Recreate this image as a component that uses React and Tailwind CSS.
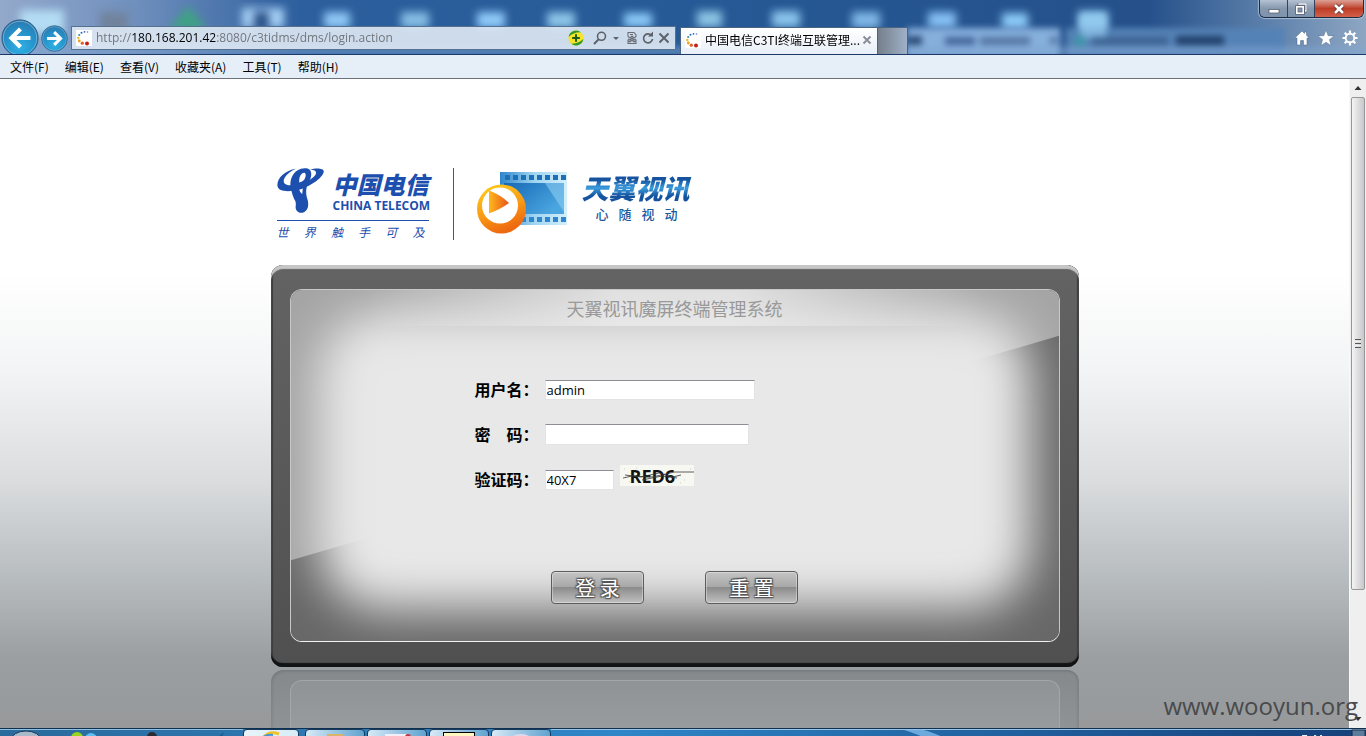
import React from "react";

const blobs = [
  [20, 10, 44, 24, "#b4dcf4"],
  [100, 12, 28, 22, "#71839c"],
  [242, 8, 42, 20, "#a4cef4"],
  [324, 12, 26, 16, "#8fc8f6"],
  [401, 12, 28, 16, "#86bde4"],
  [477, 12, 28, 16, "#8fcafa"],
  [547, 12, 28, 16, "#8cc4e8"],
  [624, 13, 28, 14, "#8ccaf8"],
  [697, 11, 25, 16, "#8cc4e4"],
  [772, 11, 28, 16, "#8ac4ec"],
  [852, 12, 28, 16, "#80b8e8"],
  [928, 12, 28, 16, "#86c0f4"],
  [1002, 13, 26, 16, "#8ccaf8"],
  [1078, 11, 30, 34, "#8cc8ee"],
];

const menus = ["文件(F)", "编辑(E)", "查看(V)", "收藏夹(A)", "工具(T)", "帮助(H)"];

function Glass() {
  return (
    <svg className="absolute inset-0 h-full w-full" viewBox="0 0 1366 54" preserveAspectRatio="none" aria-hidden="true">
      <defs>
        <filter id="soft" colorInterpolationFilters="sRGB"><feGaussianBlur stdDeviation="4" /></filter>
        <filter id="soft2" colorInterpolationFilters="sRGB"><feGaussianBlur stdDeviation="3" /></filter>
        <linearGradient id="sky" x1="0" x2="1" y1="0" y2="0">
          <stop offset="0" stopColor="#93a9cb" />
          <stop offset="0.1" stopColor="#6f8fbd" />
          <stop offset="0.22" stopColor="#2d5f9e" />
          <stop offset="0.5" stopColor="#265a96" />
          <stop offset="0.84" stopColor="#25508a" />
          <stop offset="0.93" stopColor="#5f82ac" />
          <stop offset="1" stopColor="#8ea6c2" />
        </linearGradient>
      </defs>
      <rect width="1366" height="54" fill="url(#sky)" />
      <g filter="url(#soft)">
        {blobs.map(([x, y, w, h, c]) => (
          <rect key={x} x={x} y={y} width={w} height={h} fill={c} />
        ))}
        <path d="M168 30 L188 6 L208 30Z" fill="#3fa184" />
        <rect x="254" y="12" width="15" height="16" fill="#2c5186" />
      </g>
      <g filter="url(#soft2)">
        <rect x="907" y="28" width="153" height="30" fill="#86afdc" />
        <rect x="1066" y="28" width="218" height="30" fill="#5582b6" />
        <rect x="0" y="47" width="1366" height="8" fill="#7ea5d2" opacity="0.6" />
        <rect x="1080" y="14" width="26" height="24" fill="#93c9ee" opacity="0.700" />
        <rect x="908" y="36" width="14" height="9" fill="#2c4c76" />
        <rect x="945" y="37" width="30" height="8" fill="#45669a" />
        <rect x="980" y="37" width="50" height="8" fill="#5576a3" />
        <rect x="1092" y="37" width="76" height="8" fill="#3c6291" />
        <rect x="1176" y="36" width="48" height="9" fill="#203f6a" />
        <rect x="1050" y="37" width="7" height="7" fill="#5576a3" />
        <circle cx="1080" cy="41" r="6" fill="#3f94a8" />
      </g>
    </svg>
  );
}

function Favicon() {
  return (
    <svg className="h-4 w-4 shrink-0 bg-white" viewBox="0 0 16 16" aria-hidden="true">
      <circle cx="11.5" cy="2" r="0.8" fill="#5b7fd0" />
      <circle cx="8.5" cy="1.8" r="0.9" fill="#2f5fc0" />
      <circle cx="5.5" cy="2.8" r="1" fill="#2a6ab8" />
      <circle cx="3.2" cy="5" r="1.1" fill="#3f8fa0" />
      <circle cx="2.3" cy="8" r="1.2" fill="#e8b92c" />
      <circle cx="3.3" cy="11" r="1.4" fill="#efa020" />
      <circle cx="6.3" cy="13.2" r="1.6" fill="#e0602a" />
      <circle cx="11" cy="13.4" r="2" fill="#c4201c" />
    </svg>
  );
}

function NavArrow({ left, className }) {
  return (
    <svg className={className} viewBox="0 0 40 40" aria-hidden="true">
      <defs>
        <radialGradient id="orb" cx="0.5" cy="0.75" r="0.75">
          <stop offset="0" stopColor="#2fb0e4" />
          <stop offset="0.6" stopColor="#2590c8" />
          <stop offset="1" stopColor="#2d79ad" />
        </radialGradient>
      </defs>
      <circle cx="20" cy="20" r="19" fill="url(#orb)" stroke="#2b5578" strokeWidth="1" />
      <circle cx="20" cy="20" r="17.6" fill="none" stroke="#a9dcf4" strokeWidth="1" opacity="0.5" />
      <path
        d={left ? "M31 20H12M20.5 10.5L11 20l9.5 9.5" : "M9 20h19M19.5 10.5L29 20l-9.5 9.5"}
        fill="none" stroke="#fff" strokeWidth="4.4"
      />
    </svg>
  );
}

function AddressTools() {
  return (
    <div className="flex items-center">
      <button type="button" aria-label="加速" className="mr-2">
        <svg className="h-4 w-4" viewBox="0 0 16 16">
          <circle cx="8" cy="8" r="7.6" fill="#f5e526" />
          <path d="M0.6 7A7.6 7.6 0 0 1 13 2.4Q6 2 0.6 7Z M15.4 9A7.6 7.6 0 0 1 3 13.6Q10 14 15.4 9Z" fill="#2f9a2c" />
          <path d="M8 4.2v7.6M4.2 8h7.6" stroke="#1c5c1c" strokeWidth="2" />
        </svg>
      </button>
      <button type="button" aria-label="搜索" className="mr-1">
        <svg className="h-4 w-4" viewBox="0 0 16 16" fill="none" stroke="#5c6068">
          <circle cx="9.5" cy="6.3" r="4" strokeWidth="1.6" />
          <path d="M6.6 9.4L2 14" strokeWidth="2" />
        </svg>
      </button>
      <button type="button" aria-label="更多" className="mr-1">
        <svg className="h-4 w-2" viewBox="0 0 8 16"><path d="M1 7h6L4 10Z" fill="#5c6068" /></svg>
      </button>
      <button type="button" aria-label="兼容性视图">
        <svg className="h-4 w-4" viewBox="0 0 16 16" fill="none" stroke="#6a6e76" strokeWidth="1.1">
          <path d="M4 6.500V2.500h6l2 2.500v2M4 6.500l2 1.500 2-2 2 2 2-1.500M4 13.500v-3l2 1.500 2-2 2 2 2-1.500v3ZM6 4.500h3M4 9l2 1 2-2 2 2 2-1" />
        </svg>
      </button>
      <button type="button" aria-label="刷新">
        <svg className="h-4 w-4" viewBox="0 0 16 16" fill="none" stroke="#5c6068">
          <path d="M11.500 5.500A4.500 4.500 0 1 0 12.500 9" strokeWidth="1.7" />
          <path d="M8 6.500h5V1.500Z" fill="#5c6068" stroke="none" />
        </svg>
      </button>
      <button type="button" aria-label="停止">
        <svg className="h-4 w-4" viewBox="0 0 16 16" stroke="#5c6068" strokeWidth="1.900">
          <path d="M3.500 3.500l9 9M12.500 3.500l-9 9" />
        </svg>
      </button>
    </div>
  );
}

function WindowControls() {
  return (
    <div className="absolute right-0.5 top-0 flex h-[18px] overflow-hidden rounded-b-md border border-t-0 border-[#1e2c40] shadow-[0_0_1px_1px_rgba(220,235,250,0.5)]">
      <button type="button" aria-label="最小化" className="flex w-7 items-center justify-center border-r border-[#33435c] bg-linear-to-b from-[#b4c2d2] via-[#8698ae] via-50% to-[#7d93ad]">
        <svg className="h-3 w-3" viewBox="0 0 12 12"><rect x="1" y="6.500" width="10" height="3.500" fill="#fff" stroke="#4a5568" strokeWidth="0.700" /></svg>
      </button>
      <button type="button" aria-label="还原" className="flex w-[27px] items-center justify-center border-r border-[#33435c] bg-linear-to-b from-[#b4c2d2] via-[#8698ae] via-50% to-[#7d93ad]">
        <svg className="h-3 w-3" viewBox="0 0 12 12" fill="none">
          <path d="M4 3V1h7v7H9" stroke="#4a5568" strokeWidth="2.600" />
          <rect x="1.800" y="3.800" width="6.400" height="6.400" stroke="#4a5568" strokeWidth="3" />
          <path d="M4 2V1h7v7h-1" stroke="#fff" strokeWidth="1.300" />
          <rect x="1.800" y="3.800" width="6.400" height="6.400" stroke="#fff" strokeWidth="1.700" />
        </svg>
      </button>
      <button type="button" aria-label="关闭" className="flex w-12 items-center justify-center bg-linear-to-b from-[#dba094] via-[#bd3c26] via-50% to-[#d2604a]">
        <svg className="h-3 w-3" viewBox="0 0 12 12">
          <path d="M2 2l8 8M10 2l-8 8" stroke="#5a2a28" strokeWidth="4" />
          <path d="M2 2l8 8M10 2l-8 8" stroke="#fff" strokeWidth="2.600" />
        </svg>
      </button>
    </div>
  );
}

function BrowserBar() {
  return (
    <header className="relative h-[54px] shrink-0 overflow-hidden">
      <Glass />
      <div className="relative flex h-full items-start pr-2 pt-[26px]">
        <nav className="-mt-[7px] flex items-center gap-0.5 pl-px">
          <button type="button" aria-label="后退"><NavArrow left className="block h-[38px] w-[38px]" /></button>
          <button type="button" aria-label="前进"><NavArrow className="block h-[27px] w-[27px]" /></button>
        </nav>
        <div className="ml-[3px] flex h-6 w-[605px] items-center border border-[#56708f] bg-[#dfe9f4]/90 pl-1 pr-[3px]">
          <Favicon />
          <div className="ml-1 flex-1 whitespace-nowrap font-['Open_Sans','Noto_Sans_CJK_SC',sans-serif] text-xs leading-4 text-[#73787f]">
            http://<span className="text-black">180.168.201.42</span>:8080/c3tidms/dms/login.action
          </div>
          <AddressTools />
        </div>
        <div className="ml-1 mt-px flex h-7 w-[198px] items-center border border-b-0 border-[#4a6486] bg-linear-to-b from-white to-[#e7eef8] px-1 pb-[3px] text-xs text-black">
          <Favicon />
          <span className="ml-1 flex-1 whitespace-nowrap">中国电信C3TI终端互联管理...</span>
          <button type="button" aria-label="关闭标签页">
            <svg className="h-3 w-3" viewBox="0 0 12 12" stroke="#8a8e96" strokeWidth="2"><path d="M2.500 2.500l7 7M9.500 2.500l-7 7" /></svg>
          </button>
        </div>
        <button type="button" aria-label="新建标签页" className="mt-px h-7 w-[30px] border border-b-0 border-l-0 border-[#4a6486] bg-linear-to-r from-[#76808c] to-[#9fb0c8]" />
        <div className="ml-auto mt-1 flex gap-2">
          <button type="button" aria-label="主页">
            <svg className="h-4 w-4" viewBox="0 0 16 16"><path d="M8 1L0.800 8H3v7h3.500v-4.500h3V15H13V8h2.200L12.500 5.300V2h-2v1.400Z" fill="#fff" stroke="#4c6585" strokeWidth="0.500" /></svg>
          </button>
          <button type="button" aria-label="收藏夹">
            <svg className="h-4 w-4" viewBox="0 0 16 16"><path d="M8 0l2.100 5.700 5.900.2-4.600 3.600 1.600 5.900L8 12.200l-5 3.200 1.600-5.900L0 5.900 5.900 5.700Z" fill="#fff" stroke="#4c6585" strokeWidth="0.400" /></svg>
          </button>
          <button type="button" aria-label="工具">
            <svg className="h-4 w-4" viewBox="0 0 16 16" fill="none" stroke="#fff">
              <circle cx="8" cy="8" r="4.300" strokeWidth="1.900" />
              <path d="M8 0.500v3M8 12.500v3M0.500 8h3M12.500 8h3M2.700 2.700l2.100 2.100M11.200 11.200l2.100 2.100M2.700 13.300l2.100-2.100M11.200 4.800l2.100-2.100" strokeWidth="2.200" />
            </svg>
          </button>
        </div>
      </div>
      <WindowControls />
    </header>
  );
}

function Logos() {
  return (
    <div className="ml-1.5 flex h-[74px] items-start">
      <div className="mt-0.5 w-[152px] text-[#1d4fae]">
        <div className="flex h-[50px] justify-between">
          <svg className="h-[46px] w-[48px]" viewBox="0 0 48 46" aria-label="中国电信" role="img">
            <g fill="#1d4fae">
              <path d="M19 .8C8 2.500 0 10 .4 17.500 1 24 12 24 20 22 32 19.500 46 10 46.800 3.500 47-.3 38-.3 33 1.800c5.500-.2 7.500 2 5 5.700C34 12.500 24 16.800 16 17.300 8.500 17.700 5 15 7.500 10 9.500 6.200 14 3 19 .8Z" />
              <path d="M24 .8C16 3 12 12 13.800 20c1 5.500 2.500 9.500 4.700 13.500 1 3.500-.6 5.500.5 8 1.800 3.800 6.500 4.300 9.300 1.800C32.300 40 31.500 34 30 30c-1.300-4.500-1.300-9 .8-14.500C35.500 9 35.500 2 30.500.5 28.500 0 26 .1 24 .8Z" />
            </g>
            <path fill="#fff" d="M25 5.500C27.800 3.400 29.800 5.500 28.200 9.800 27.300 12.300 25.500 13.600 22.300 14.600 21.800 11 22.600 7.500 25 5.500Z" />
            <path fill="#fff" d="M22.300 21.600C23.600 21.300 24.600 21 25.800 20.400L25.200 26C23.600 25 22.600 23.500 22.300 21.600Z" />
          </svg>
          <div className="flex w-24 flex-col">
            <span className="whitespace-nowrap text-2xl font-black italic leading-8">中国电信</span>
            <span className="whitespace-nowrap font-['Open_Sans',sans-serif] text-xs font-bold leading-3">CHINA TELECOM</span>
          </div>
        </div>
        <div className="mt-0.5 flex justify-between border-t border-[#1d4fae] pr-1 pt-[3px] text-xs italic leading-4">
          {["世", "界", "触", "手", "可", "及"].map((c) => <span key={c}>{c}</span>)}
        </div>
      </div>
      <div className="ml-6 mt-0.5 h-[72px] w-px bg-[#1f5fae]" />
      <svg className="ml-[23px] mt-1 h-[66px] w-[92px]" viewBox="0 0 92 66" aria-hidden="true">
        <defs>
          <linearGradient id="film" x1="0" x2="1" y1="0" y2="0.600">
            <stop offset="0" stopColor="#1768b4" /><stop offset="1" stopColor="#4aa6e0" />
          </linearGradient>
          <linearGradient id="strip" x1="0" x2="1"><stop offset="0" stopColor="#2f86cc" /><stop offset="0.500" stopColor="#9fd4f0" /><stop offset="1" stopColor="#d4effa" /></linearGradient>
          <linearGradient id="ball" x1="0" x2="0.400" y1="0" y2="1">
            <stop offset="0" stopColor="#ffd21c" /><stop offset="0.600" stopColor="#f99a14" /><stop offset="1" stopColor="#ee6a10" />
          </linearGradient>
          <linearGradient id="tri" x1="0" x2="1"><stop offset="0" stopColor="#ffb81c" /><stop offset="1" stopColor="#e8541a" /></linearGradient>
        </defs>
        <rect x="23" y="2" width="67" height="53" fill="url(#strip)" />
        <rect x="27" y="13" width="60" height="31" fill="url(#film)" />
        <path d="M68 13h19v29Z" fill="#8ccdf0" opacity="0.600" />
        {[28, 36, 44, 52, 60, 68, 76, 84].map((x) => (
          <g key={x}>
            <rect x={x} y="5" width="5" height="5" fill="#1d6fb8" />
            <rect x={x} y="47" width="5" height="5" fill="#2f86cc" />
          </g>
        ))}
        <circle cx="24.500" cy="39" r="24.500" fill="url(#ball)" />
        <circle cx="23" cy="35.500" r="18" fill="#fff" />
        <path d="M12 20.500Q24 25 32 33 24 39 12 43.500Z" fill="url(#tri)" />
      </svg>
      <div className="ml-[13px] mt-1.5 flex flex-col">
        <span className="bg-linear-to-b from-[#16539f] from-25% via-[#3a9cdc] via-50% to-[#16539f] to-75% bg-clip-text pr-1 text-[27px] font-black italic leading-8 text-transparent">天翼视讯</span>
        <div className="mx-3.5 flex justify-between pr-0.5 text-[13px] font-medium leading-5 text-[#1c5a9e]">
          {["心", "随", "视", "动"].map((c) => <span key={c}>{c}</span>)}
        </div>
      </div>
    </div>
  );
}

function PanelShade() {
  return (
    <svg className="absolute inset-0 h-full w-full" viewBox="0 0 768 352" preserveAspectRatio="none" aria-hidden="true">
      <defs>
        <filter id="vig" x="-20%" y="-40%" width="140%" height="180%" colorInterpolationFilters="sRGB"><feGaussianBlur stdDeviation="24" /></filter>
        <linearGradient id="sheen" x1="0" x2="1">
          <stop offset="0.100" stopColor="#ececec" stopOpacity="0" />
          <stop offset="0.420" stopColor="#ececec" stopOpacity="0.800" />
          <stop offset="0.580" stopColor="#ececec" stopOpacity="0.800" />
          <stop offset="0.900" stopColor="#ececec" stopOpacity="0" />
        </linearGradient>
      </defs>
      <rect width="768" height="352" fill="#686868" />
      <rect x="28" y="22" width="712" height="298" rx="64" fill="#e8e8e8" filter="url(#vig)" />
      <path d="M0 0H768V46L0 271Z" fill="#e8e8e8" opacity="0.480" />
      <rect width="768" height="36" fill="url(#sheen)" />
    </svg>
  );
}

const inputStyle = "border border-[#e3e3e3] border-t-[#8c8f94] bg-white px-px font-['Open_Sans',sans-serif] text-[13px] leading-4 text-black outline-none";
const buttonStyle = "h-[33px] w-[93px] rounded border border-[#5c5c5c] bg-[linear-gradient(#c4c4c4,#a8a8a8_48%,#8c8c8c_50%,#c0c0c0)] text-xl leading-6 text-white shadow-[inset_0_0_0_1px_rgba(255,255,255,0.35)] [text-shadow:0_0_2px_#555,1px_1px_1px_#555,-1px_-1px_1px_#555,1px_-1px_1px_#555,-1px_1px_1px_#555]";

function Row({ id, label, children }) {
  return (
    <div className="flex h-[45px] items-center">
      <label htmlFor={id} className="w-[70px] whitespace-nowrap pb-0.5 text-base font-bold leading-5 text-black">{label}</label>
      {children}
    </div>
  );
}

function Captcha() {
  return (
    <div className="relative -mt-2 ml-1.5 flex h-[21px] w-[74px] items-center bg-[#f8f8f2] pl-2.5">
      <span className="font-['Open_Sans',sans-serif] text-lg font-bold leading-5 text-[#111]">RED6</span>
      <svg className="absolute inset-0 h-full w-full" viewBox="0 0 74 21" fill="none" stroke="#333" strokeWidth="0.800" aria-hidden="true">
        <path d="M3 13l9-2 20 1 14-3 8-2 20 0M5 10l16 2 18-4 14 4 8-2M22 15l20-4 15 2" />
        <path d="M4 4h1M16 3h1M64 15h1M70 4h1M60 18h1M9 17h1" stroke="#bbb" />
      </svg>
    </div>
  );
}

function LoginPanel() {
  return (
    <section className="rounded-xl bg-linear-to-b from-[#636363] to-[#505050] px-[19px] pb-[25px] pt-6 shadow-[inset_0_4px_1px_#c6c6c6,inset_0_-4px_1px_#121314,inset_2px_0_1px_#3c3c3c,inset_-2px_0_1px_#3c3c3c]">
      <div className="relative overflow-hidden rounded-xl border border-[#c8c8c8] border-b-[#f2f2f2]">
        <PanelShade />
        <form className="relative flex flex-col" onSubmit={(e) => e.preventDefault()}>
          <h1 className="h-9 text-center text-lg leading-9 text-[#999]">天翼视讯魔屏终端管理系统</h1>
          <div className="mt-[41px] pl-[184px]">
            <Row id="user" label="用户名：">
              <input id="user" defaultValue="admin" className={`${inputStyle} h-5 w-[210px]`} />
            </Row>
            <Row id="pass" label={"密\u3000码："}>
              <input id="pass" type="password" className={`${inputStyle} h-[21px] w-[204px]`} />
            </Row>
            <Row id="code" label="验证码：">
              <input id="code" defaultValue="40X7" className={`${inputStyle} h-5 w-[69px]`} />
              <Captcha />
            </Row>
          </div>
          <div className="mb-[37px] mt-[69px] flex justify-center gap-[61px]">
            <button type="submit" className={buttonStyle}>登 录</button>
            <button type="reset" className={buttonStyle}>重 置</button>
          </div>
        </form>
      </div>
    </section>
  );
}

function ScrollBar() {
  return (
    <div className="flex w-[17px] shrink-0 flex-col items-center border-l border-[#f8f8f8] bg-[#efefef]" aria-hidden="true">
      <svg className="h-[18px] w-4 shrink-0" viewBox="0 0 16 18"><path d="M4.500 11L8 7l3.500 4Z" fill="#333" /></svg>
      <div className="flex w-3.5 grow-[80] flex-col items-center justify-center gap-px rounded-xs border border-[#979797] bg-linear-to-r from-[#f4f4f4] to-[#c8c8cc]">
        <span className="h-px w-1.5 bg-[#555]" /><span className="h-px w-1.5 bg-[#eee]" />
        <span className="h-px w-1.5 bg-[#555]" /><span className="h-px w-1.5 bg-[#eee]" />
        <span className="h-px w-1.5 bg-[#555]" />
      </div>
      <div className="grow-[20]" />
      <svg className="h-[18px] w-4 shrink-0" viewBox="0 0 16 18"><path d="M4.500 7h7L8 11Z" fill="#333" /></svg>
    </div>
  );
}

const taskButton = "h-2.5 rounded-t border border-[#16395e] bg-linear-to-r from-[#d6eaf6] to-[#5fa3cf] flex justify-center";

function TaskBar() {
  return (
    <footer className="relative flex h-2 shrink-0 overflow-hidden border-t border-[#10304f] bg-linear-to-r from-[#2b6a9c] via-[#2f86c8] via-45% to-[#16407a]">
      <svg className="h-2 w-[243px] shrink-0" viewBox="0 0 243 8" aria-hidden="true">
        <rect width="243" height="1" fill="#8fc0e0" />
        <ellipse cx="26" cy="11" rx="15" ry="9" fill="#a9b9c9" stroke="#1c3c5c" />
        <circle cx="77" cy="9" r="6" fill="#9bd41c" /><circle cx="91" cy="10" r="6" fill="#5cc0f4" />
        <circle cx="152" cy="8" r="5" fill="#2b2b33" />
        <path d="M218 8l6-5-2 5Z" fill="#1a5c94" />
      </svg>
      <div className="flex">
        <div className={`${taskButton} w-14 from-[#e8f4fa] to-[#d8ecf8]`}>
          <svg className="h-2 w-6" viewBox="0 0 24 8" aria-hidden="true"><path d="M4 8Q10 0 20 4" stroke="#f0c22c" strokeWidth="3" fill="none" /><path d="M3 8Q8 4 14 5" stroke="#3f96d8" strokeWidth="2" fill="none" /></svg>
        </div>
        <div className={`${taskButton} ml-1.5 w-[60px]`}><span className="mt-1 h-2 w-4 bg-[#d9b46a]" /></div>
        <div className={`${taskButton} ml-0.5 w-[60px]`}>
          <svg className="h-2 w-8" viewBox="0 0 32 8" aria-hidden="true"><rect x="4" y="4" width="22" height="5" fill="#f3eef8" /><circle cx="27" cy="7" r="3" fill="#c83440" /></svg>
        </div>
        <div className={`${taskButton} ml-0.5 w-[60px]`}><span className="mt-0.5 h-2 w-8 border border-black bg-[#fff6c0]" /></div>
        <div className={`${taskButton} ml-0.5 w-[60px]`}>
          <svg className="h-2 w-6" viewBox="0 0 24 8" aria-hidden="true"><ellipse cx="12" cy="9" rx="10" ry="5" fill="#dcd8ee" /></svg>
        </div>
      </div>
      <svg className="h-2 min-w-0 flex-1" viewBox="0 0 816 8" preserveAspectRatio="none" aria-hidden="true">
        <rect width="816" height="1" fill="#9cc4e4" />
        <path d="M350 0h20q14 4 22 8h-20Q364 4 350 0Z" fill="#8cc4f4" opacity="0.700" />
        <path d="M752 6h5v2h-5ZM764 6h2v2h-2ZM770 6h2v2h-2Z" fill="#e8f0f8" />
        <rect x="802" y="1" width="13" height="7" fill="#5c7c9c" stroke="#1c2c44" />
      </svg>
    </footer>
  );
}

export default function App() {
  return (
    <div className="relative flex h-screen flex-col overflow-hidden font-['Noto_Sans_CJK_SC',sans-serif]">
      <BrowserBar />
      <nav className="flex h-[25px] shrink-0 items-center gap-4 border-b border-t border-b-[#6d727a] border-t-[#1b3866] bg-[#e6eef8] pl-2.5 text-xs text-black">
        {menus.map((m) => <button type="button" key={m} className="whitespace-nowrap">{m}</button>)}
      </nav>
      <div className="flex min-h-0 flex-1">
        <main className="min-w-0 flex-1 overflow-hidden bg-[linear-gradient(#fff_30%,#f3f4f5_45%,#dadcde_62%,#b9bec1_76%,#9b9fa1_89%,#97999b)]">
          <div className="mx-auto w-full max-w-[808px] pt-[87px]">
            <Logos />
            <div className="mt-[25px]"><LoginPanel /></div>
            <div className="mt-[3px] h-28 rounded-t-xl bg-linear-to-b from-[#85898b] to-[#999c9e] px-[19px] pt-2.5 shadow-[inset_2px_2px_2px_rgba(0,0,0,0.08),inset_-2px_0_2px_rgba(0,0,0,0.08)]" aria-hidden="true">
              <div className="h-full rounded-t-xl border border-b-0 border-[#a3a7a9] bg-linear-to-b from-[#8f9395] to-[#a3a5a7]" />
            </div>
          </div>
        </main>
        <ScrollBar />
      </div>
      <TaskBar />
      <p className="absolute bottom-3.5 right-2 font-['Open_Sans',sans-serif] text-2xl leading-8 text-[#484a4c]">www.wooyun.org</p>
    </div>
  );
}
